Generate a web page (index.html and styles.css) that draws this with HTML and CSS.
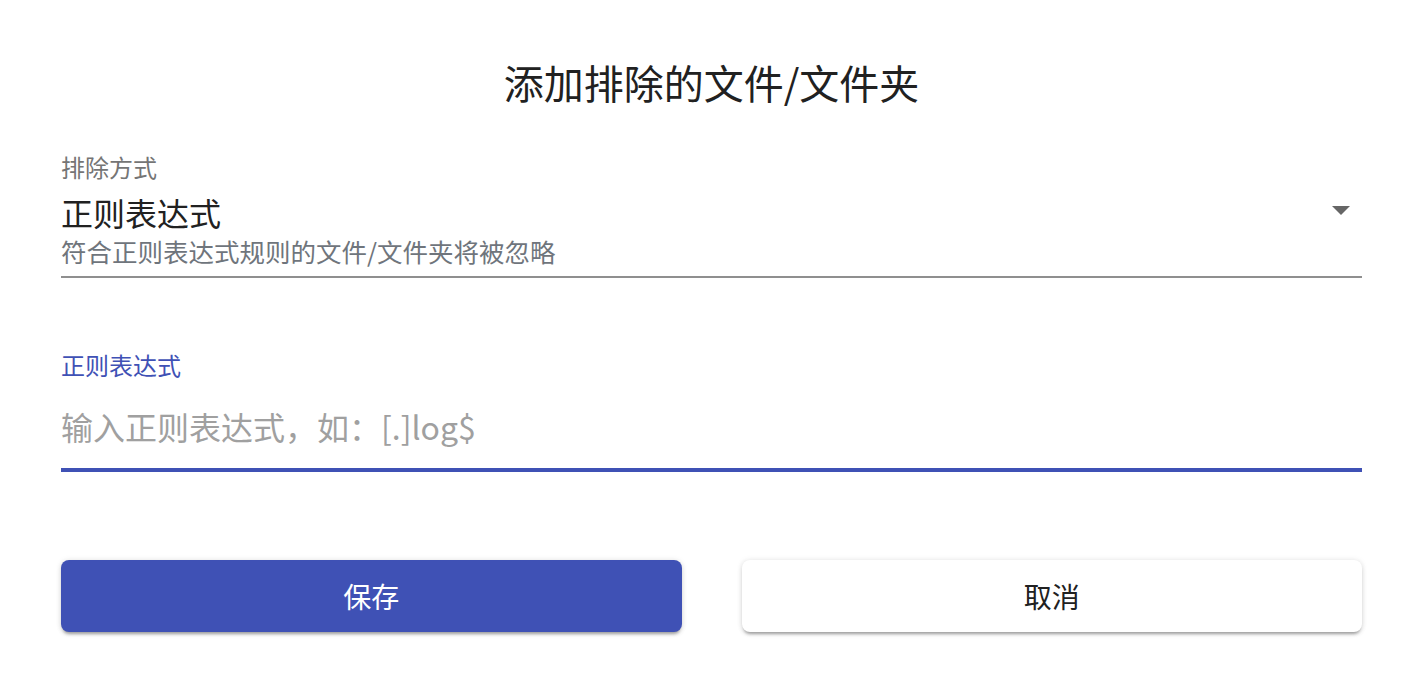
FILE: index.html
```html
<!DOCTYPE html>
<html lang="zh-CN">
<head>
<meta charset="utf-8">
<title>添加排除的文件/文件夹</title>
<link rel="stylesheet" href="styles.css">
</head>
<body>
<div class="dialog">
  <h2 class="title">添加排除的文件/文件夹</h2>

  <div class="select-field">
    <div class="field-label">排除方式</div>
    <div class="select-row">
      <span class="select-value">正则表达式</span>
      <svg class="arrow" width="18" height="10" viewBox="0 0 18 10"><path d="M0 0 L18 0 L9 9 Z" fill="#666"/></svg>
    </div>
    <div class="helper">符合正则表达式规则的文件/文件夹将被忽略</div>
  </div>

  <div class="text-field">
    <label class="field-label focused" for="regex">正则表达式</label>
    <input id="regex" class="text-input" type="text" placeholder="输入正则表达式，如：[.]log$">
  </div>

  <div class="actions">
    <button class="btn btn-primary" type="button">保存</button>
    <button class="btn btn-default" type="button">取消</button>
  </div>
</div>
</body>
</html>
```

FILE: styles.css
```css
* { box-sizing: border-box; }
html, body {
  margin: 0;
  padding: 0;
  background: #fff;
}
body {
  font-family: "Noto Sans CJK SC", "Noto Sans", sans-serif;
  color: #212121;
}
.dialog {
  width: 1426px;
  height: 678px;
  padding: 62px 64px 0 61px;
  display: flex;
  flex-direction: column;
}
.title {
  margin: 0;
  font-size: 40px;
  line-height: 40px;
  font-weight: 400;
  text-align: center;
  color: #212121;
}
.select-field {
  margin-top: 53px;
  padding-bottom: 12px;
  border-bottom: 2px solid #8f8f8f;
}
.field-label {
  display: block;
  font-size: 24px;
  line-height: 24px;
  color: #757575;
}
.field-label.focused {
  color: #3f51b5;
}
.select-row {
  margin-top: 17px;
  display: flex;
  align-items: center;
  justify-content: space-between;
  height: 32px;
}
.select-value {
  font-size: 32px;
  line-height: 32px;
  color: #212121;
}
.arrow {
  margin-right: 12px;
  margin-top: -2px;
}
.helper {
  margin-top: 9px;
  font-size: 25.5px;
  line-height: 27px;
  color: #6f757c;
}
.text-field {
  margin-top: 75px;
  display: flex;
  flex-direction: column;
}
.text-input {
  margin-top: 33px;
  border: none;
  border-bottom: 4px solid #3f51b5;
  padding: 0 0 26px 0;
  font-family: inherit;
  font-size: 32px;
  line-height: 32px;
  height: 62px;
  color: #212121;
  outline: none;
  background: transparent;
}
.text-input::placeholder {
  color: #a0a0a0;
  opacity: 1;
}
.actions {
  margin-top: 88px;
  display: flex;
  gap: 60px;
}
.btn {
  flex: 1;
  height: 72px;
  border: none;
  border-radius: 8px;
  font-family: inherit;
  font-size: 28px;
  line-height: 28px;
  cursor: pointer;
  box-shadow: 0 4px 3px -2px rgba(0,0,0,0.28), 0 2px 5px 0 rgba(0,0,0,0.12), 0 0 6px 0 rgba(0,0,0,0.08);
}
.btn-primary {
  background: #3f51b5;
  color: #fff;
}
.btn-default {
  background: #fff;
  color: #212121;
}
```
